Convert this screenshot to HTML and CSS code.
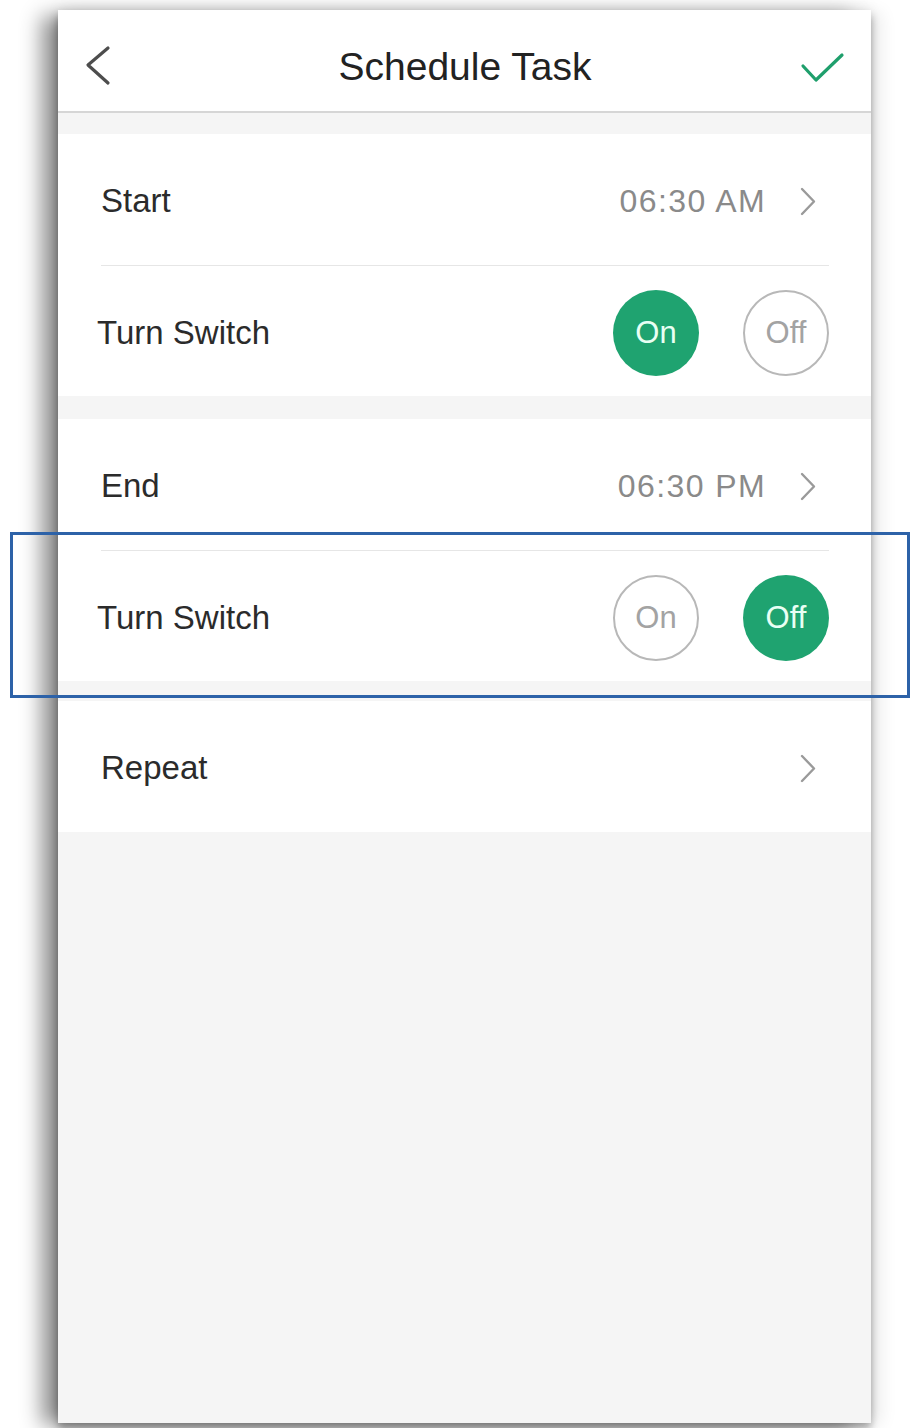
FILE: index.html
```html
<!DOCTYPE html>
<html lang="en">
<head>
    <meta charset="UTF-8">
    <meta name="viewport" content="width=device-width, initial-scale=1.0">
    <title>Schedule Task</title>
    <link rel="stylesheet" href="styles.css">
</head>
<body>

<div class="stage">
    <div class="phone">
        <header class="topbar">
            <svg class="back" width="30" height="48" viewBox="0 0 30 48">
                <polyline points="24,5 4,22 24,40" fill="none" stroke="#4d4d4d" stroke-width="3.2" stroke-linecap="round" stroke-linejoin="round"/>
            </svg>
            <h1 class="title">Schedule Task</h1>
            <svg class="done" width="48" height="40" viewBox="0 0 48 40">
                <polyline points="5,19 18,33 44,8" fill="none" stroke="#1f9f6c" stroke-width="3.2" stroke-linecap="round" stroke-linejoin="round"/>
            </svg>
        </header>

        <section class="group">
            <div class="row">
                <span class="label">Start</span>
                <span class="value">06:30 AM</span>
                <svg class="chevron" width="34" height="34" viewBox="0 0 34 34">
                    <polyline points="7,5 19,17.5 7,30" fill="none" stroke="#9a9a9a" stroke-width="2.4" stroke-linecap="round" stroke-linejoin="round"/>
                </svg>
            </div>
            <div class="row">
                <span class="label label-switch">Turn Switch</span>
                <div class="toggles">
                    <span class="pill pill-on">On</span>
                    <span class="pill">Off</span>
                </div>
            </div>
        </section>

        <section class="group">
            <div class="row">
                <span class="label">End</span>
                <span class="value">06:30 PM</span>
                <svg class="chevron" width="34" height="34" viewBox="0 0 34 34">
                    <polyline points="7,5 19,17.5 7,30" fill="none" stroke="#9a9a9a" stroke-width="2.4" stroke-linecap="round" stroke-linejoin="round"/>
                </svg>
            </div>
            <div class="row">
                <span class="label label-switch">Turn Switch</span>
                <div class="toggles">
                    <span class="pill">On</span>
                    <span class="pill pill-on">Off</span>
                </div>
            </div>
        </section>

        <section class="group group-last">
            <div class="row">
                <span class="label">Repeat</span>
                <svg class="chevron" width="34" height="34" viewBox="0 0 34 34">
                    <polyline points="7,5 19,17.5 7,30" fill="none" stroke="#9a9a9a" stroke-width="2.4" stroke-linecap="round" stroke-linejoin="round"/>
                </svg>
            </div>
        </section>
    </div>

    <div class="highlight"></div>
</div>

</body>
</html>
```

FILE: styles.css
```css
body {
    margin: 0;
    background-color: #ffffff;
    font-family: "Liberation Sans", Arial, sans-serif;
}
.stage {
    position: relative;
    padding: 10px 41px 0 58px;
    height: 1428px;
    box-sizing: border-box;
    overflow: hidden;
}
.phone {
    width: 813px;
    height: 1413px;
    background-color: #f5f5f5;
    display: flex;
    flex-direction: column;
    box-shadow: -18px 4px 20px -2px rgba(0, 0, 0, 0.45),
                10px 2px 16px rgba(0, 0, 0, 0.08),
                0 -4px 12px rgba(0, 0, 0, 0.06),
                0 6px 8px rgba(0, 0, 0, 0.3);
}
.topbar {
    height: 103px;
    box-sizing: border-box;
    padding: 13px 25px 0 26px;
    background-color: #ffffff;
    border-bottom: 2px solid #d6d6d6;
    display: grid;
    grid-template-columns: 1fr auto 1fr;
    align-items: center;
}
.topbar .done {
    justify-self: end;
}
.title {
    margin: 0;
    font-size: 39px;
    font-weight: normal;
    color: #222222;
}
.group {
    margin-top: 21px;
    background-color: #ffffff;
}
.group + .group {
    margin-top: 23px;
}
.group + .group-last {
    margin-top: 20px;
}
.row {
    height: 131px;
    box-sizing: border-box;
    padding-top: 3px;
    margin: 0 42px 0 43px;
    display: flex;
    align-items: center;
}
.row + .row {
    border-top: 1px solid #e6e6e6;
}
.label {
    flex: 1;
    font-size: 33px;
    color: #2b2b2b;
}
.label-switch {
    margin-left: -4px;
}
.value {
    font-size: 32px;
    letter-spacing: 1.4px;
    color: #8a8a8a;
    margin-right: 29px;
}
.chevron {
    display: block;
}
.toggles {
    display: flex;
    gap: 44px;
}
.pill {
    width: 86px;
    height: 86px;
    box-sizing: border-box;
    border-radius: 50%;
    border: 2px solid #b8b8b8;
    display: flex;
    align-items: center;
    justify-content: center;
    font-size: 31px;
    color: #a3a3a3;
}
.pill-on {
    border: none;
    background-color: #1fa370;
    color: #e8fff4;
}
.highlight {
    position: absolute;
    left: 10px;
    top: 532px;
    width: 900px;
    height: 166px;
    box-sizing: border-box;
    border: 3px solid #2d62a8;
}
```
